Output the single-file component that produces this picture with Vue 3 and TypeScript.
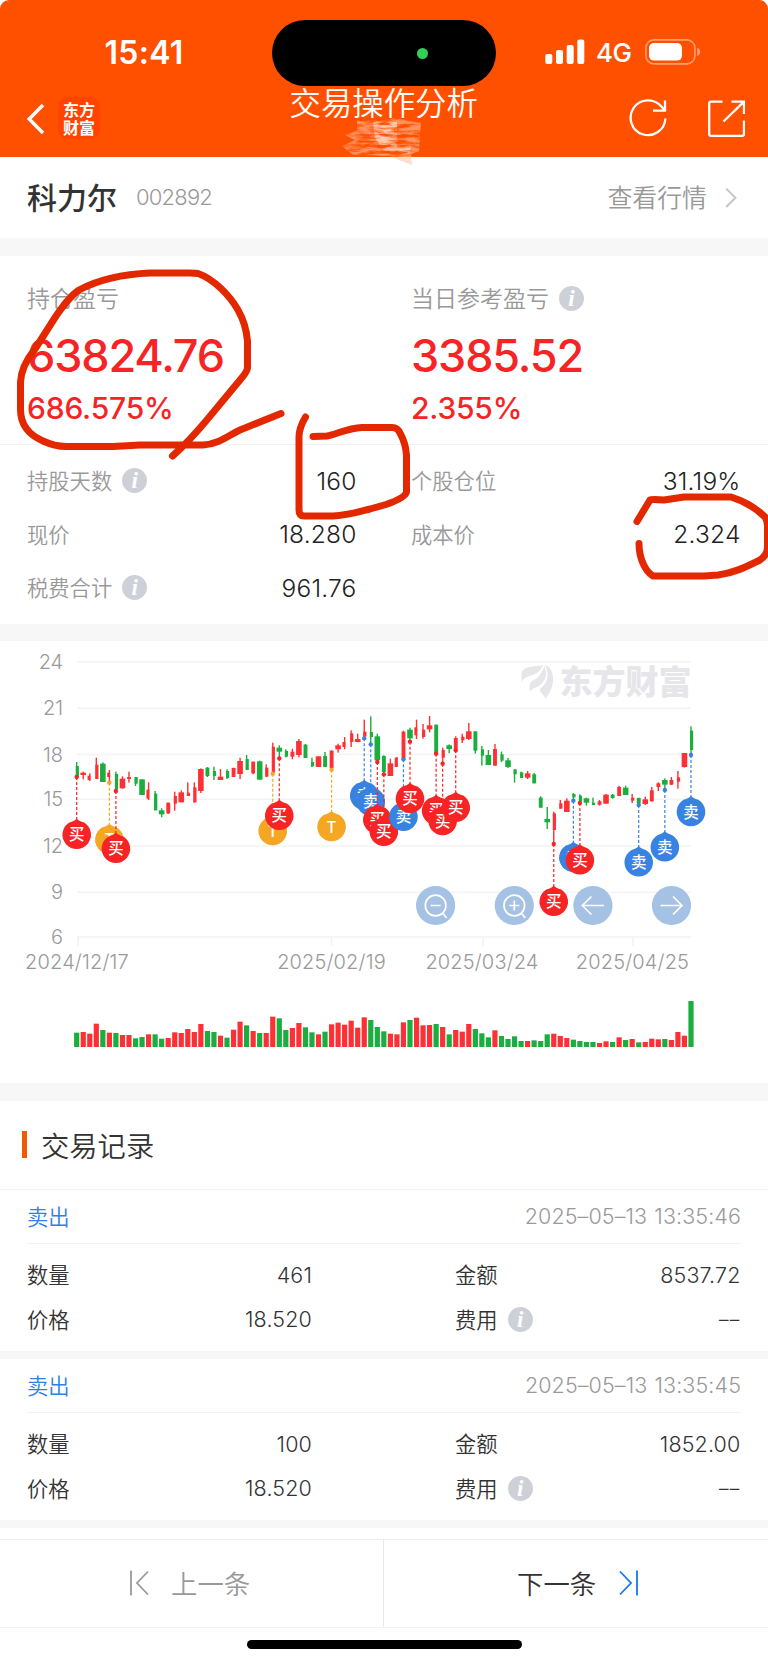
<script setup lang="ts">
type Tone = 'r' | 'g'
type Shape = 'f' | 'm' | 'l' | 'r'
type Candle = [Tone, number, number, number, number, Shape]
type PinKind = 'buy' | 'sell' | 't'

const STEP = 6.535
const FIRST = 76.7
const cx = (i: number): number => FIRST + STEP * i
// Chart heights are kept in thirds of a pixel
const third = (v: number): number => v / 3

const candles: Candle[] = [
  ['g', 366, 411, 378, 411, 'r'], ['r', 395, 418, 398, 405, 'f'], ['r', 400, 423, 407, 420, 'l'],
  ['r', 353, 417, 374, 417, 'r'], ['g', 367, 426, 371, 426, 'f'], ['r', 390, 426, 398, 411, 'l'],
  ['g', 395, 453, 402, 448, 'r'], ['r', 409, 446, 416, 445, 'f'], ['r', 395, 428, 411, 417, 'm'],
  ['g', 411, 438, 411, 431, 'r'], ['g', 418, 465, 418, 465, 'f'], ['r', 427, 480, 449, 476, 'l'],
  ['g', 453, 511, 461, 511, 'r'], ['g', 505, 532, 511, 523, 'f'], ['r', 488, 522, 488, 520, 'm'],
  ['r', 455, 512, 468, 491, 'r'], ['r', 451, 487, 457, 487, 'f'], ['r', 427, 468, 458, 468, 'r'],
  ['r', 427, 488, 442, 487, 'r'], ['r', 385, 459, 387, 453, 'f'], ['g', 381, 411, 383, 408, 'm'],
  ['g', 380, 420, 393, 408, 'r'], ['r', 387, 420, 410, 420, 'f'], ['g', 388, 417, 393, 414, 'r'],
  ['r', 383, 411, 384, 411, 'm'], ['r', 353, 417, 363, 402, 'f'], ['g', 345, 390, 357, 390, 'r'],
  ['r', 365, 403, 365, 400, 'm'], ['g', 362, 419, 364, 419, 'f'], ['r', 373, 411, 383, 410, 'r'],
  ['r', 308, 400, 320, 398, 'r'], ['g', 316, 355, 323, 335, 'f'], ['g', 328, 352, 333, 350, 'r'],
  ['r', 326, 358, 335, 350, 'm'], ['r', 297, 352, 303, 345, 'f'], ['g', 312, 354, 314, 354, 'm'],
  ['g', 353, 381, 366, 379, 'r'], ['r', 349, 381, 349, 381, 'f'], ['g', 336, 381, 348, 381, 'm'],
  ['r', 331, 388, 332, 385, 'm'], ['r', 311, 338, 316, 328, 'f'], ['r', 291, 328, 306, 321, 'l'],
  ['r', 271, 321, 280, 306, 'r'], ['r', 281, 307, 297, 306, 'f'], ['r', 239, 295, 275, 290, 'r'],
  ['g', 229, 312, 276, 291, 'r'], ['g', 281, 367, 289, 361, 'f'], ['g', 346, 403, 348, 396, 'm'],
  ['r', 356, 408, 370, 408, 'f'], ['r', 351, 381, 353, 381, 'l'], ['r', 272, 358, 275, 355, 'm'],
  ['g', 263, 305, 269, 295, 'f'], ['r', 239, 297, 262, 286, 'l'], ['r', 252, 296, 269, 291, 'r'],
  ['r', 228, 277, 256, 268, 'f'], ['g', 254, 341, 254, 340, 'm'], ['r', 323, 371, 330, 353, 'r'],
  ['g', 313, 340, 316, 327, 'f'], ['r', 289, 331, 294, 328, 'm'], ['r', 281, 309, 290, 301, 'r'],
  ['r', 249, 300, 274, 297, 'f'], ['g', 274, 341, 274, 332, 'm'], ['g', 318, 377, 328, 347, 'r'],
  ['g', 330, 375, 345, 375, 'f'], ['r', 312, 377, 327, 377, 'm'], ['g', 335, 366, 343, 362, 'r'],
  ['g', 354, 384, 361, 381, 'f'], ['g', 388, 428, 388, 403, 'r'], ['g', 395, 414, 397, 414, 'r'],
  ['r', 393, 417, 400, 413, 'f'], ['g', 399, 430, 403, 430, 'm'], ['g', 469, 503, 473, 503, 'm'],
  ['g', 501, 567, 537, 547, 'f'], ['r', 515, 612, 520, 570, 'r'], ['r', 480, 506, 490, 506, 'r'],
  ['r', 475, 516, 482, 516, 'f'], ['g', 459, 482, 462, 472, 'r'], ['g', 463, 489, 467, 484, 'r'],
  ['g', 473, 497, 475, 488, 'f'], ['g', 473, 495, 488, 495, 'r'], ['r', 480, 497, 484, 494, 'm'],
  ['r', 462, 491, 464, 491, 'f'], ['g', 462, 476, 464, 474, 'm'], ['r', 437, 468, 441, 468, 'm'],
  ['g', 437, 465, 443, 465, 'f'], ['r', 462, 489, 473, 482, 'r'], ['g', 473, 495, 474, 490, 'm'],
  ['r', 470, 495, 478, 492, 'f'], ['r', 441, 485, 451, 484, 'm'], ['r', 427, 453, 430, 441, 'm'],
  ['g', 415, 449, 420, 434, 'f'], ['r', 411, 435, 420, 434, 'm'], ['r', 393, 446, 412, 425, 'r'],
  ['r', 339, 383, 339, 381, 'f'], ['g', 259, 344, 272, 330, 'r'],
]

const bodyBox: Record<Shape, [number, number]> = {
  f: [-2.8, 5.6], m: [-1.9, 3.9], l: [-2.2, 3], r: [-1, 3.2],
}

const volumeTops: number[] = [
  158, 156, 161, 131, 150, 158, 159, 165, 165, 175, 171, 163, 163, 176, 174, 157, 159, 147, 156, 132,
  153, 156, 167, 173, 149, 125, 136, 153, 159, 159, 110, 115, 150, 144, 129, 142, 157, 163, 155, 133,
  128, 134, 122, 143, 112, 120, 141, 154, 161, 163, 127, 120, 113, 136, 135, 132, 141, 163, 150, 155,
  132, 147, 160, 172, 151, 168, 177, 169, 183, 183, 181, 183, 163, 161, 168, 174, 179, 183, 186, 186,
  189, 184, 186, 172, 180, 177, 187, 186, 176, 178, 177, 180, 156, 167, 63,
]
const volumeTones =
  'grrrgrgrrggrggrrrrrrggrgrrgrgrrggrrggrgrrrrrrggg' + 'rrrgrrrgrgrrrgggrggggrgggrrrggggrrgrgrgrrrgrrrg'
const volumeTone = (i: number): string => volumeTones[i] ?? 'r'

const pins: { kind: PinKind; i: number; dot: number; cy: number }[] = [
  { kind: 'buy', i: 0, dot: 411, cy: 584 },
  { kind: 't', i: 5, dot: 428, cy: 599 },
  { kind: 'buy', i: 6, dot: 453, cy: 626 },
  { kind: 't', i: 30, dot: 401, cy: 573 },
  { kind: 'buy', i: 31, dot: 355, cy: 527 },
  { kind: 't', i: 39, dot: 389, cy: 561 },
  { kind: 'sell', i: 44, dot: 295, cy: 467 },
  { kind: 'sell', i: 45, dot: 313, cy: 485 },
  { kind: 'buy', i: 46, dot: 366, cy: 539 },
  { kind: 'buy', i: 47, dot: 403, cy: 575 },
  { kind: 'sell', i: 50, dot: 358, cy: 530 },
  { kind: 'buy', i: 51, dot: 305, cy: 476 },
  { kind: 'buy', i: 55, dot: 341, cy: 512 },
  { kind: 'buy', i: 56, dot: 371, cy: 543 },
  { kind: 'buy', i: 58, dot: 331, cy: 503 },
  { kind: 'buy', i: 73, dot: 612, cy: 785 },
  { kind: 'sell', i: 76, dot: 482, cy: 653 },
  { kind: 'buy', i: 77, dot: 489, cy: 661 },
  { kind: 'sell', i: 86, dot: 495, cy: 667 },
  { kind: 'sell', i: 90, dot: 450, cy: 622 },
  { kind: 'sell', i: 94, dot: 345, cy: 516 },
]
const pinText: Record<PinKind, string> = { buy: '买', sell: '卖', t: 'T' }

const yAxis = [
  { v: 24, y: 22 }, { v: 21, y: 68.3 }, { v: 18, y: 114.5 }, { v: 15, y: 159.3 },
  { v: 12, y: 206 }, { v: 9, y: 252.3 }, { v: 6, y: 297 },
]
const xAxis = [
  { label: '2024/12/17', tick: 78, x: 77 },
  { label: '2025/02/19', tick: 331.5, x: 331.5 },
  { label: '2025/03/24', tick: 483, x: 482 },
  { label: '2025/04/25', tick: 633, x: 632.5 },
]

const holdings = [
  [{ label: '持股天数', info: true, value: '160' }, { label: '个股仓位', info: false, value: '31.19%' }],
  [{ label: '现价', info: false, value: '18.280' }, { label: '成本价', info: false, value: '2.324' }],
  [{ label: '税费合计', info: true, value: '961.76' }],
]

const records = [
  { side: '卖出', time: '2025–05–13 13:35:46', qty: '461', amount: '8537.72', price: '18.520', fee: '––' },
  { side: '卖出', time: '2025–05–13 13:35:45', qty: '100', amount: '1852.00', price: '18.520', fee: '––' },
]
</script>

<template>
  <div class="page">
    <header class="top">
      <div class="status">
        <span class="clock">15:41</span>
        <div class="island"><i class="cam"></i></div>
        <div class="signals">
          <svg class="bars" width="40" height="26" viewBox="0 0 40 26">
            <rect x="0.3" y="15" width="7" height="10" rx="2" />
            <rect x="11" y="11" width="7" height="14" rx="2" />
            <rect x="21.7" y="6" width="7" height="19" rx="2" />
            <rect x="32.3" y="0.5" width="7" height="24.5" rx="2" />
          </svg>
          <span class="net">4G</span>
          <svg class="battery" width="56" height="26" viewBox="0 0 56 26">
            <rect x="0.9" y="0.9" width="49" height="24" rx="8" fill="none" stroke="#fff" stroke-opacity=".45" stroke-width="1.6" />
            <rect x="4" y="4" width="33" height="17.6" rx="5" fill="#fff" />
            <path d="M52.3 8.8c3.6 1.3 3.6 6.9 0 8.2z" fill="#fff" fill-opacity=".5" />
          </svg>
        </div>
      </div>
      <div class="nav">
        <svg class="back" width="18" height="32" viewBox="0 0 18 32">
          <path d="M16 2 2.2 16 16 30" fill="none" stroke="#fff" stroke-width="3.4" />
        </svg>
        <div class="brand"><span>东方</span><span>财富</span></div>
        <h1 class="title">交易操作分析</h1>
        <svg class="reload" width="40" height="40" viewBox="0 0 40 40" fill="none" stroke="#fff" stroke-width="2.3">
          <path d="M37.400 20.500A17.400 17.400 0 1 1 33.400 8.600L36 11.600" />
          <path d="M37 2.400V12.600H25" />
        </svg>
        <svg class="share" width="38" height="38" viewBox="0 0 38 38" fill="none" stroke="#fff" stroke-width="2.300">
          <path d="M15.500 2.600H4Q2.200 2.600 2.200 4.400V35Q2.200 36.800 4 36.800H35.200Q37 36.800 37 35V21.500" />
          <path d="M24.500 2.600H37V15M37 2.600 16.500 22.500" />
        </svg>
      </div>
      <svg class="smudge" width="84" height="50" viewBox="0 0 84 50">
        <defs>
          <filter id="grain" x="0" y="0" width="1" height="1">
            <feTurbulence type="fractalNoise" baseFrequency=".06 .3" numOctaves="4" seed="3" />
            <feColorMatrix values="0 0 0 0 1  0 0 0 0 .84  0 0 0 0 .76  3 0 0 0 -.95" />
            <feComposite in2="SourceGraphic" operator="in" />
          </filter>
        </defs>
        <path d="M16 2 38 3 54 0 80 5 78 33 70 36 72 47 50 38 12 37 1 28 14 22 4 17 16 12z" fill="#fff" fill-opacity=".42" filter="url(#grain)" />
        <path d="M32 4 56 4 56 30 70 28 68 37 44 34 34 20z" fill="#fff" fill-opacity=".6" filter="url(#grain)" />
        <path d="M50 39H70L71 47Z" fill="#ffcdb9" fill-opacity=".65" />
      </svg>
    </header>

    <section class="stock">
      <b class="name">科力尔</b>
      <span class="code">002892</span>
      <span class="quote">查看行情</span>
      <svg width="12" height="22" viewBox="0 0 12 22"><path d="M1.200 1.600 10.400 10.800 1.200 20" fill="none" stroke="#c6c6c6" stroke-width="2" /></svg>
    </section>
    <div class="gap"></div>

    <section class="profit">
      <div class="profit-cell">
        <div class="caption"><span>持仓盈亏</span></div>
        <div class="big">63824.76</div>
        <div class="pct">686.575%</div>
      </div>
      <div class="profit-cell">
        <div class="caption"><span>当日参考盈亏</span><i class="info">i</i></div>
        <div class="big">3385.52</div>
        <div class="pct">2.355%</div>
      </div>
    </section>
    <section class="holding">
      <div v-for="(row, r) in holdings" :key="r" class="hold-row">
        <div v-for="c in row" :key="c.label" class="hold-cell">
          <span class="hold-label"><span>{{ c.label }}</span><i v-if="c.info" class="info">i</i></span>
          <span class="hold-value">{{ c.value }}</span>
        </div>
      </div>
    </section>
    <div class="gap"></div>

    <section class="chart">
      <svg width="768" height="442" viewBox="0 1 768 442">
        <g class="grid">
          <line v-for="a in yAxis" :key="a.v" x1="77" x2="691" :y1="a.y" :y2="a.y" />
          <line v-for="a in xAxis" :key="a.tick" :x1="a.tick" :x2="a.tick" y1="297" y2="306" />
        </g>
        <g class="axis">
          <text v-for="a in yAxis" :key="a.v" x="63" :y="a.y + 7" text-anchor="end">{{ a.v }}</text>
          <text v-for="a in xAxis" :key="a.label" class="date" :x="a.x" y="329" text-anchor="middle">{{ a.label }}</text>
        </g>
        <g class="mark">
          <path d="M521.500 43V36C521 31 523 29 528 27.500C534 25.800 540 26.500 543 24.800C541 33 533 35 528 36.500C524 38 522 40 521.500 43z" />
          <path d="M530 52C529.500 47 529 44 532 41C539 38 543 32 544 25C549 34 545 42 539 46C535 48 531 49 530 52z" />
          <path d="M545.500 59C544 54 539 52 540 49C549 42 549 34 545 25C551 27 553.500 33 553 41C552.500 48 549 54 545.500 59z" />
          <path d="M529 38.500C537 36 542 32 543.800 25.500M538 47.500C547 42 548.500 34 544.500 25.500" class="vein" />
          <text x="559.500" y="53.500">东方财富</text>
        </g>
        <g v-for="(c, i) in candles" :key="'c' + i" :class="c[0]">
          <rect :x="cx(i) - 0.7" :y="third(c[1])" width="1.4" :height="third(c[2] - c[1])" />
          <rect :x="cx(i) + bodyBox[c[5]][0]" :y="third(c[3])" :width="bodyBox[c[5]][1]" :height="third(c[4] - c[3])" />
        </g>
        <g class="tools">
          <g transform="translate(435.600 265.500)">
            <circle r="19.600" /><path d="M-5 0H5M7.200 7.800 11 12.500" /><circle class="lens" r="10.300" />
          </g>
          <g transform="translate(514.300 265.500)">
            <circle r="19.600" /><path d="M-5 0H5M0-5V5M7.200 7.800 11 12.500" /><circle class="lens" r="10.300" />
          </g>
          <g transform="translate(592.900 265.500)">
            <circle r="19.600" /><path d="M11 0H-10M-1.500-9-10.500 0-1.500 9" />
          </g>
          <g transform="translate(671.500 265.500)">
            <circle r="19.600" /><path d="M-11 0H10M1.500-9 10.500 0 1.500 9" />
          </g>
        </g>
        <g v-for="(p, i) in pins" :key="'p' + i" :class="['pin', p.kind]">
          <line :x1="cx(p.i)" :x2="cx(p.i)" :y1="third(p.dot)" :y2="third(p.cy) - 15" />
          <circle :cx="cx(p.i)" :cy="third(p.dot)" r="2.200" />
          <g :transform="`translate(${cx(p.i)} ${third(p.cy)})`">
            <path d="M0-16C2.500-13.500 5-13.200 7.500-12.200A14.300 14.300 0 1 1-7.500-12.200C-5-13.200-2.500-13.500 0-16z" />
            <text y="5.600" text-anchor="middle">{{ pinText[p.kind] }}</text>
          </g>
        </g>
        <rect
          v-for="(t, i) in volumeTops" :key="'v' + i" :class="volumeTone(i)"
          :x="cx(i) - 2.6" :y="340 + third(t)" width="5.200" :height="third(201 - t)"
        />
      </svg>
    </section>
    <div class="gap"></div>

    <section class="records">
      <h2 class="heading"><i></i>交易记录</h2>
      <article v-for="r in records" :key="r.time" class="record">
        <div class="rec-head"><span class="side">{{ r.side }}</span><time>{{ r.time }}</time></div>
        <div class="rec-body">
          <div class="rec-row">
            <span class="label">数量</span><span class="num">{{ r.qty }}</span>
            <span class="second"><span class="label">金额</span></span><span class="num">{{ r.amount }}</span>
          </div>
          <div class="rec-row">
            <span class="label">价格</span><span class="num">{{ r.price }}</span>
            <span class="second"><span class="label">费用</span><i class="info">i</i></span><span class="num fee">{{ r.fee }}</span>
          </div>
        </div>
      </article>
    </section>

    <footer class="pager">
      <div class="page-btn prev">
        <svg width="20" height="26" viewBox="0 0 20 26"><path d="M1 .5V25.500M18 1.500 7 13 18 24.500" /></svg><span>上一条</span>
      </div>
      <div class="page-btn next">
        <span>下一条</span><svg width="20" height="26" viewBox="0 0 20 26"><path d="M19 .5V25.500M2 1.500 13 13 2 24.500" /></svg>
      </div>
    </footer>
    <div class="home"><i></i></div>

    <svg class="ink" width="768" height="330" viewBox="0 265 768 330">
      <path d="M172.500 456C184 446 195 434 206 421L240 380Q247 372 247.500 368V341Q246 324 238 310C230 296 214 279 198 273.500Q195 273 190 273H150C124 274 98 280 79 290C70 296 63 306 56 316L35 349C27 359 21 369 20.500 382V408C20 425 29 435 43 441Q55 446.500 66 446.500H113L140 445H203C219 444 229 435 240 430L281 413.500" />
      <path d="M305.500 417Q299 428 299 437V510Q299 516 304 516H333C350 515 362 511 370 509L386 504.500Q405 498 406.500 492V455Q405.500 443 400.500 434Q398 427.500 392 427.500H362C348 428 337 434 327 436L313 436.500" />
      <path d="M637 521.500 650 500Q652 499 664 500L684 497H731C744 501 757 509 765 517Q768 522 767.500 528V548Q767 555 760 560C750 565 736 573 718 575L704 576H653C645 571 639 558 639 543.500" />
    </svg>
  </div>
</template>

<style>
body { background: #fff; }
</style>

<style scoped>
.page {
  position: relative; width: 768px; height: 1665px; overflow: hidden; background: #fff; color: #333;
  font-family: Inter, "Noto Sans CJK SC", sans-serif; font-weight: 350;
}
h1, h2 { margin: 0; font-weight: 350; }
i { font-style: normal; }
.top { position: relative; height: 157px; background: #ff5000; border-radius: 9px 9px 0 0; color: #fff; }
.status { height: 86px; display: grid; grid-template-columns: 272px 224px 272px; }
.clock { padding: 33px 0 0 104.500px; font: 600 32px/40px Inter, sans-serif; letter-spacing: .3px; }
.island { margin-top: 20px; height: 66px; border-radius: 33px; background: #000; display: flex; align-items: center; }
.cam { width: 11px; height: 11px; border-radius: 50%; background: #30d158; margin: 1px 0 0 144.500px; }
.signals { display: flex; align-items: flex-start; padding: 39px 0 0 49px; }
.bars { fill: #fff; }
.net { width: 50px; margin-top: -1px; padding-left: 11px; box-sizing: border-box; font: 500 26px/30px Inter, sans-serif; letter-spacing: -.6px; }
.battery { margin-left: 10px; }
.nav { height: 71px; display: flex; align-items: flex-start; }
.back { margin: 17px 0 0 27px; }
.brand {
  width: 42px; height: 42px; margin: 11px 0 0 13px; border-radius: 9px; background: #ff4300;
  display: flex; flex-direction: column; align-items: center; justify-content: center;
  font: 700 16px/18px "Noto Sans CJK SC", sans-serif;
}
.title { margin: -5.500px 0 0 189.500px; width: 187.500px; white-space: nowrap; font-size: 31.400px; line-height: 46px; }
.reload { margin: 12px 0 0 151px; }
.share { margin: 13px 0 0 39px; }
.smudge { position: absolute; left: 341px; top: 118px; }
.stock { height: 81px; padding: 0 31px 0 27px; display: flex; align-items: center; }
.name { font-weight: 500; font-size: 30px; margin-top: -4px; }
.code { margin-left: 19px; margin-top: -1px; font-size: 22px; color: #999; letter-spacing: -.8px; }
.quote { margin: -3px 18px 0 auto; font-size: 24.900px; color: #999; }
.gap { height: 17.500px; background: #f7f7f7; }
.profit { height: 188px; border-bottom: 1px solid #f2f2f2; display: grid; grid-template-columns: 1fr 1fr; }
.profit-cell { padding: 27px 0 0 27px; }
.caption { display: flex; align-items: center; height: 32px; font-size: 23px; color: #999; }
.caption span, .hold-label span { margin-top: -2.500px; }
.big { margin-top: 14.500px; height: 54px; font-weight: 500; font-size: 45px; line-height: 54px; color: #f62424; letter-spacing: -1.150px; }
.pct { margin-top: 5px; height: 40px; font-weight: 500; font-size: 30px; line-height: 40px; color: #f62424; letter-spacing: -.2px; }
.info {
  width: 25px; height: 25px; margin-left: 10px; border-radius: 50%; background: #cdd1d7; color: #fff;
  display: inline-flex; align-items: center; justify-content: center;
  font: italic 700 23px/25px "Liberation Serif", serif;
}
.holding { height: 179px; padding-top: 9.500px; box-sizing: border-box; }
.hold-row { height: 53.500px; display: grid; grid-template-columns: 1fr 1fr; }
.hold-cell { display: flex; align-items: center; justify-content: space-between; padding: 0 27.500px 0 27px; }
.hold-label { display: flex; align-items: center; font-size: 21.300px; color: #999; }
.hold-value { font-size: 24.500px; color: #222; letter-spacing: .2px; }
.chart { height: 442px; }
.chart svg { display: block; }
.grid line { stroke: #f3f3f4; stroke-width: 1.600; }
.axis text { fill: #999; font-size: 20px; letter-spacing: -.1px; }
.axis .date { letter-spacing: .15px; }
.mark { fill: #e6e6ea; }
.mark .vein { fill: none; stroke: #fff; stroke-width: 1; }
.mark text { font: 800 33px "Noto Sans CJK SC", sans-serif; }
.r { fill: #fd3135; }
.g { fill: #19ae3d; }
.tools circle { fill: #a5c2e4; }
.tools path, .tools .lens { fill: none; stroke: #fff; stroke-width: 1.700; }
.pin line { stroke-width: 1.200; stroke-dasharray: 3 2; }
.pin text { fill: #fff; font: 500 15.500px "Noto Sans CJK SC", sans-serif; }
.buy { fill: #f62424; }
.buy line { stroke: #f62424; }
.sell { fill: #3883e2; }
.sell line { stroke: #3883e2; }
.t { fill: #f5a623; }
.t line { stroke: #f5a623; }
.heading { height: 88px; border-bottom: 1px solid #f2f2f2; display: flex; align-items: center; padding-left: 21.500px; font-size: 28.300px; color: #333; }
.heading i { width: 5.500px; height: 27px; margin-right: 14px; background: #f05a00; }
.record { height: 161px; border-bottom: 8.500px solid #f7f7f7; color: #333; font-size: 21.300px; }
.rec-head { height: 53px; margin: 0 27px; border-bottom: 1px solid #f2f2f2; display: flex; align-items: center; justify-content: space-between; }
.side { color: #2f80e7; margin-top: -2px; }
time { color: #999; letter-spacing: .1px; font-size: 21.500px; word-spacing: 1px; }
.rec-body { padding: 9px 27.500px 0 27px; }
.rec-row { height: 44.500px; display: grid; align-items: center; grid-template-columns: 142px 143px 1fr 140px; }
.label { margin-top: -2px; }
.num { text-align: right; font-size: 21.500px; letter-spacing: .15px; }
.fee { font-size: 19px; letter-spacing: 1.200px; }
.second { padding-left: 143px; display: flex; align-items: center; }
.pager { height: 89px; margin-top: 11px; box-sizing: border-box; border-top: 1px solid #eee; border-bottom: 1px solid #f2f2f2; display: grid; grid-template-columns: 1fr 1fr; }
.page-btn { display: flex; align-items: center; font-size: 26.400px; }
.page-btn span { margin-top: -2px; }
.page-btn path { fill: none; stroke: currentColor; stroke-width: 1.800; }
.prev { padding-left: 130px; gap: 21px; color: #999; border-right: 1px solid #e8e8e8; }
.next { padding-left: 133px; gap: 22px; }
.next svg { color: #1677ee; }
.home { display: flex; justify-content: center; padding-top: 12.500px; }
.home i { width: 275px; height: 9px; border-radius: 5px; background: #000; }
.ink { position: absolute; left: 0; top: 265px; fill: none; stroke: #e32800; stroke-width: 7; stroke-linecap: round; stroke-linejoin: round; pointer-events: none; }
</style>
